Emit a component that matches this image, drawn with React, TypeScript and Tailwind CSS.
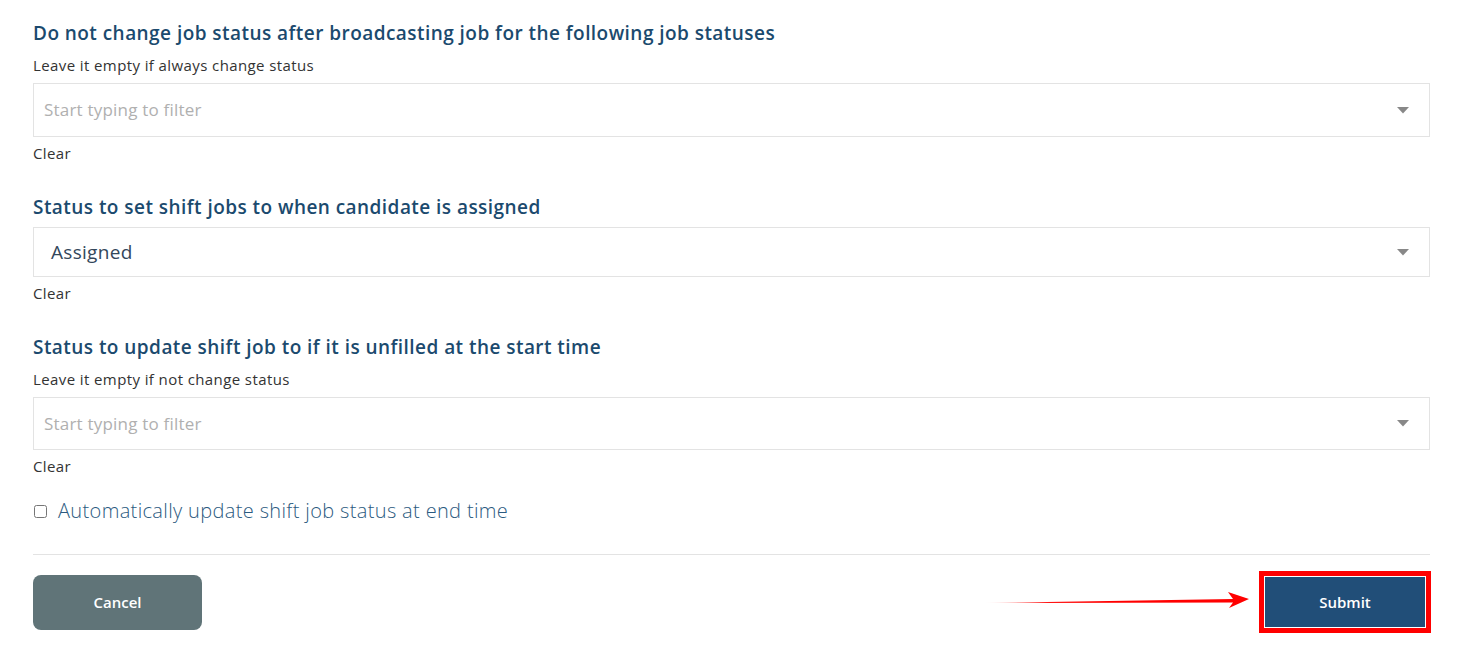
import React from 'react'

const font = { fontFamily: '"Open Sans", Lato, sans-serif' }

function Caret() {
  return (
    <svg width="12" height="7" viewBox="0 0 12 7" className="shrink-0">
      <path d="M0 0h12L6 6.5z" fill="#888" />
    </svg>
  )
}

function SelectBox({ value, placeholder, h }: { value?: string; placeholder?: string; h: string }) {
  return (
    <div className={`flex items-center justify-between border border-[#e3e3e3] bg-white pr-[20px] ${h}`}>
      {value ? (
        <span className="pl-[17px] text-[19px] tracking-[0.3px] text-[#33475b]">{value}</span>
      ) : (
        <span className="pl-[10px] text-[17px] tracking-[0.2px] text-[#b0b0b0]">{placeholder}</span>
      )}
      <Caret />
    </div>
  )
}

function Heading({ children }: { children: React.ReactNode }) {
  return <h3 className="text-[19px] font-semibold leading-[26px] tracking-[0.45px] text-[#1b4a6e]">{children}</h3>
}

function Hint({ children }: { children: React.ReactNode }) {
  return <p className="mt-[9px] mb-[8px] text-[15px] leading-[20px] tracking-[0.4px] text-[#333]">{children}</p>
}

function Clear() {
  return <div className="mt-[6px] text-[15px] leading-[20px] tracking-[0.4px] text-[#333]">Clear</div>
}

export default function App() {
  return (
    <div className="min-h-[650px] bg-white pl-[33px] pr-[28px] pt-[20px]" style={font}>
      {/* Section 1 */}
      <section>
        <Heading>Do not change job status after broadcasting job for the following job statuses</Heading>
        <Hint>Leave it empty if always change status</Hint>
        <SelectBox placeholder="Start typing to filter" h="h-[54px]" />
        <Clear />
      </section>

      {/* Section 2 */}
      <section className="mt-[31px]">
        <Heading>Status to set shift jobs to when candidate is assigned</Heading>
        <div className="mt-[7px]">
          <SelectBox value="Assigned" h="h-[50px]" />
        </div>
        <Clear />
      </section>

      {/* Section 3 */}
      <section className="mt-[31px]">
        <Heading>Status to update shift job to if it is unfilled at the start time</Heading>
        <Hint>Leave it empty if not change status</Hint>
        <SelectBox placeholder="Start typing to filter" h="h-[53px]" />
        <Clear />
      </section>

      <label className="mt-[20px] flex items-center gap-[11px]">
        <input type="checkbox" className="ml-[1px] h-[13px] w-[13px]" />
        <span className="text-[20px] font-light tracking-[0.35px] text-[#2b5a80]">
          Automatically update shift job status at end time
        </span>
      </label>

      <hr className="mt-[28px] border-t border-[#e3e3e3]" />

      <div className="mt-[16px] flex items-center justify-between">
        <button className="h-[55px] w-[169px] rounded-[8px] bg-[#607478] text-[15px] font-semibold text-white">
          Cancel
        </button>
        <div className="flex items-center">
          <svg width="270" height="20" viewBox="0 0 270 20" className="mr-[6px]">
            <defs>
              <linearGradient id="fade" x1="0" x2="1" y1="0" y2="0">
                <stop offset="0" stopColor="#ff0000" stopOpacity="0" />
                <stop offset="0.25" stopColor="#ff0000" stopOpacity="1" />
              </linearGradient>
            </defs>
            <path d="M0 11 L250 7 L245 0 L266 7 L246 16 L250 10.5 Z" fill="url(#fade)" />
          </svg>
          <div className="mr-[-1px] border-[5px] border-[#ff0000] p-px">
            <button className="h-[50px] w-[160px] bg-[#214e78] text-[15px] font-semibold text-white">Submit</button>
          </div>
        </div>
      </div>
    </div>
  )
}
